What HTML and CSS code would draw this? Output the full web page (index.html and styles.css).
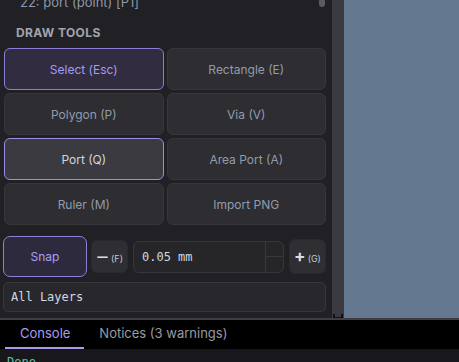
FILE: index.html
```html
<!DOCTYPE html>
<html>
<head>
<meta charset="utf-8">
<link rel="stylesheet" href="styles.css">
</head>
<body>
<div class="app">
  <div class="main">
    <div class="panel">
      <div class="scroll-thumb"></div>
      <div class="list-item">22: port (point) [P1]</div>
      <div class="section-title">DRAW TOOLS</div>
      <div class="tools">
        <button class="tool active">Select (Esc)</button>
        <button class="tool">Rectangle (E)</button>
        <button class="tool">Polygon (P)</button>
        <button class="tool">Via (V)</button>
        <button class="tool selected">Port (Q)</button>
        <button class="tool">Area Port (A)</button>
        <button class="tool">Ruler (M)</button>
        <button class="tool">Import PNG</button>
      </div>
      <div class="snap-row">
        <button class="snap">Snap</button>
        <button class="step"><span class="sign">&#8212;</span><span class="key">(F)</span></button>
        <div class="num-input">
          <span class="num-value">0.05 mm</span>
          <div class="spin"><span></span><span></span></div>
        </div>
        <button class="step"><span class="sign plus">+</span><span class="key">(G)</span></button>
      </div>
      <div class="layer-select">All Layers</div>
    </div>
    <div class="splitter"><span class="grip"></span></div>
    <div class="canvas"></div>
  </div>
  <div class="hline"></div>
  <div class="tabs">
    <div class="tab current">Console</div>
    <div class="tab">Notices (3 warnings)</div>
  </div>
  <div class="console">
    <div class="log">Done</div>
  </div>
</div>
</body>
</html>
```
FILE: styles.css
```css
html, body {
  margin: 0;
  padding: 0;
  background: #18181c;
}
.app {
  width: 459px;
  height: 362px;
  display: flex;
  flex-direction: column;
  overflow: hidden;
  font-family: Inter, "Noto Sans", sans-serif;
}
.main {
  height: 318px;
  flex-shrink: 0;
  display: flex;
  flex-direction: row;
}
.panel {
  width: 332px;
  background: #212125;
  position: relative;
  overflow: hidden;
  box-sizing: border-box;
  padding: 0 6px 0 4px;
}
.scroll-thumb {
  position: absolute;
  left: 319px;
  top: -6px;
  width: 6px;
  height: 13px;
  border-radius: 3px;
  background: #5a5a62;
}
.list-item {
  margin-top: -7px;
  padding-left: 16px;
  height: 18px;
  line-height: 18px;
  font-size: 13px;
  color: #8e96a8;
}
.section-title {
  margin-top: 14px;
  padding-left: 12px;
  height: 23px;
  line-height: 16px;
  font-size: 12px;
  font-weight: 700;
  letter-spacing: 0.4px;
  color: #a3a3ad;
}
.tools {
  display: grid;
  grid-template-columns: 1fr 1fr;
  grid-auto-rows: 42px;
  gap: 3px;
}
.tool {
  margin: 0;
  background: #2d2d32;
  border: 1px solid #36363c;
  border-radius: 6px;
  color: #939bab;
  font-family: Inter, "Noto Sans", sans-serif;
  font-size: 12px;
  padding: 0;
}
.tool.active {
  background: #312c40;
  border-color: #8a7fd8;
  color: #a49cf0;
}
.tool.selected {
  background: #3a3a40;
  border-color: #9a8ee2;
  color: #d2d4dc;
}
.snap-row {
  display: flex;
  align-items: center;
  margin-top: 11px;
  margin-left: -1px;
  height: 41px;
}
.snap {
  width: 84px;
  height: 41px;
  margin: 0;
  background: #2d2a3d;
  border: 1px solid #8b80d8;
  border-radius: 7px;
  color: #a8a0f2;
  font-family: Inter, "Noto Sans", sans-serif;
  font-size: 12px;
  padding: 0;
}
.step {
  width: 37px;
  height: 33px;
  margin: 0 0 0 4px;
  background: #2e2e33;
  border: 1px solid #2a2a2e;
  border-radius: 6px;
  display: flex;
  align-items: center;
  justify-content: center;
  gap: 2px;
  padding: 0;
  color: #dcdce2;
  font-family: Inter, "Noto Sans", sans-serif;
}
.step:last-child {
  margin-left: 5px;
  height: 35px;
}
.sign {
  font-size: 13px;
  font-weight: 700;
  line-height: 1;
  transform: scaleX(0.8);
}
.sign.plus {
  font-size: 17px;
  transform: none;
}
.key {
  font-size: 9px;
  color: #c8c8d0;
  margin-top: 3px;
}
.num-input {
  width: 151px;
  height: 32px;
  margin-left: 5px;
  box-sizing: border-box;
  background: #262629;
  border: 1px solid #36363c;
  border-radius: 6px;
  display: flex;
  align-items: center;
  justify-content: space-between;
  padding-left: 8px;
  overflow: hidden;
}
.num-value {
  font-family: "DejaVu Sans Mono", monospace;
  font-size: 12px;
  color: #ccd6e6;
}
.spin {
  width: 17px;
  height: 100%;
  border-left: 1px solid #38383e;
  display: flex;
  flex-direction: column;
}
.spin span {
  flex: 1;
}
.spin span:first-child {
  border-bottom: 1px solid #38383e;
}
.layer-select {
  margin-top: 5px;
  margin-left: -1px;
  width: 323px;
  height: 30px;
  box-sizing: border-box;
  background: #28282c;
  border: 1px solid #36363c;
  border-radius: 5px;
  padding-left: 7px;
  line-height: 28px;
  font-family: "DejaVu Sans Mono", monospace;
  font-size: 12px;
  color: #d4d8e2;
}
.splitter {
  width: 12px;
  background: #3a3a40;
  position: relative;
}
.grip {
  position: absolute;
  left: 1px;
  bottom: 0;
  width: 6px;
  height: 3px;
  border-left: 2px solid #111;
  border-right: 2px solid #111;
  border-bottom: 1px solid #111;
}
.canvas {
  flex: 1;
  background: #64788f;
}
.hline {
  height: 2px;
  flex-shrink: 0;
  background: #3e3e44;
}
.tabs {
  height: 29px;
  flex-shrink: 0;
  box-sizing: border-box;
  background: #000;
  display: flex;
  flex-direction: row;
  padding-left: 5px;
}
.tab {
  padding: 0 14px 0 15px;
  line-height: 27px;
  font-size: 13px;
  color: #9a9aa2;
  border-bottom: 2px solid transparent;
}
.tab.current {
  color: #a89cf0;
  border-bottom-color: #a89cf0;
}
.console {
  flex: 1;
  background: #18181c;
  padding-left: 7px;
}
.log {
  font-family: "DejaVu Sans Mono", monospace;
  font-size: 12px;
  line-height: 16px;
  margin-top: 5px;
  color: #5cc19a;
}
```
